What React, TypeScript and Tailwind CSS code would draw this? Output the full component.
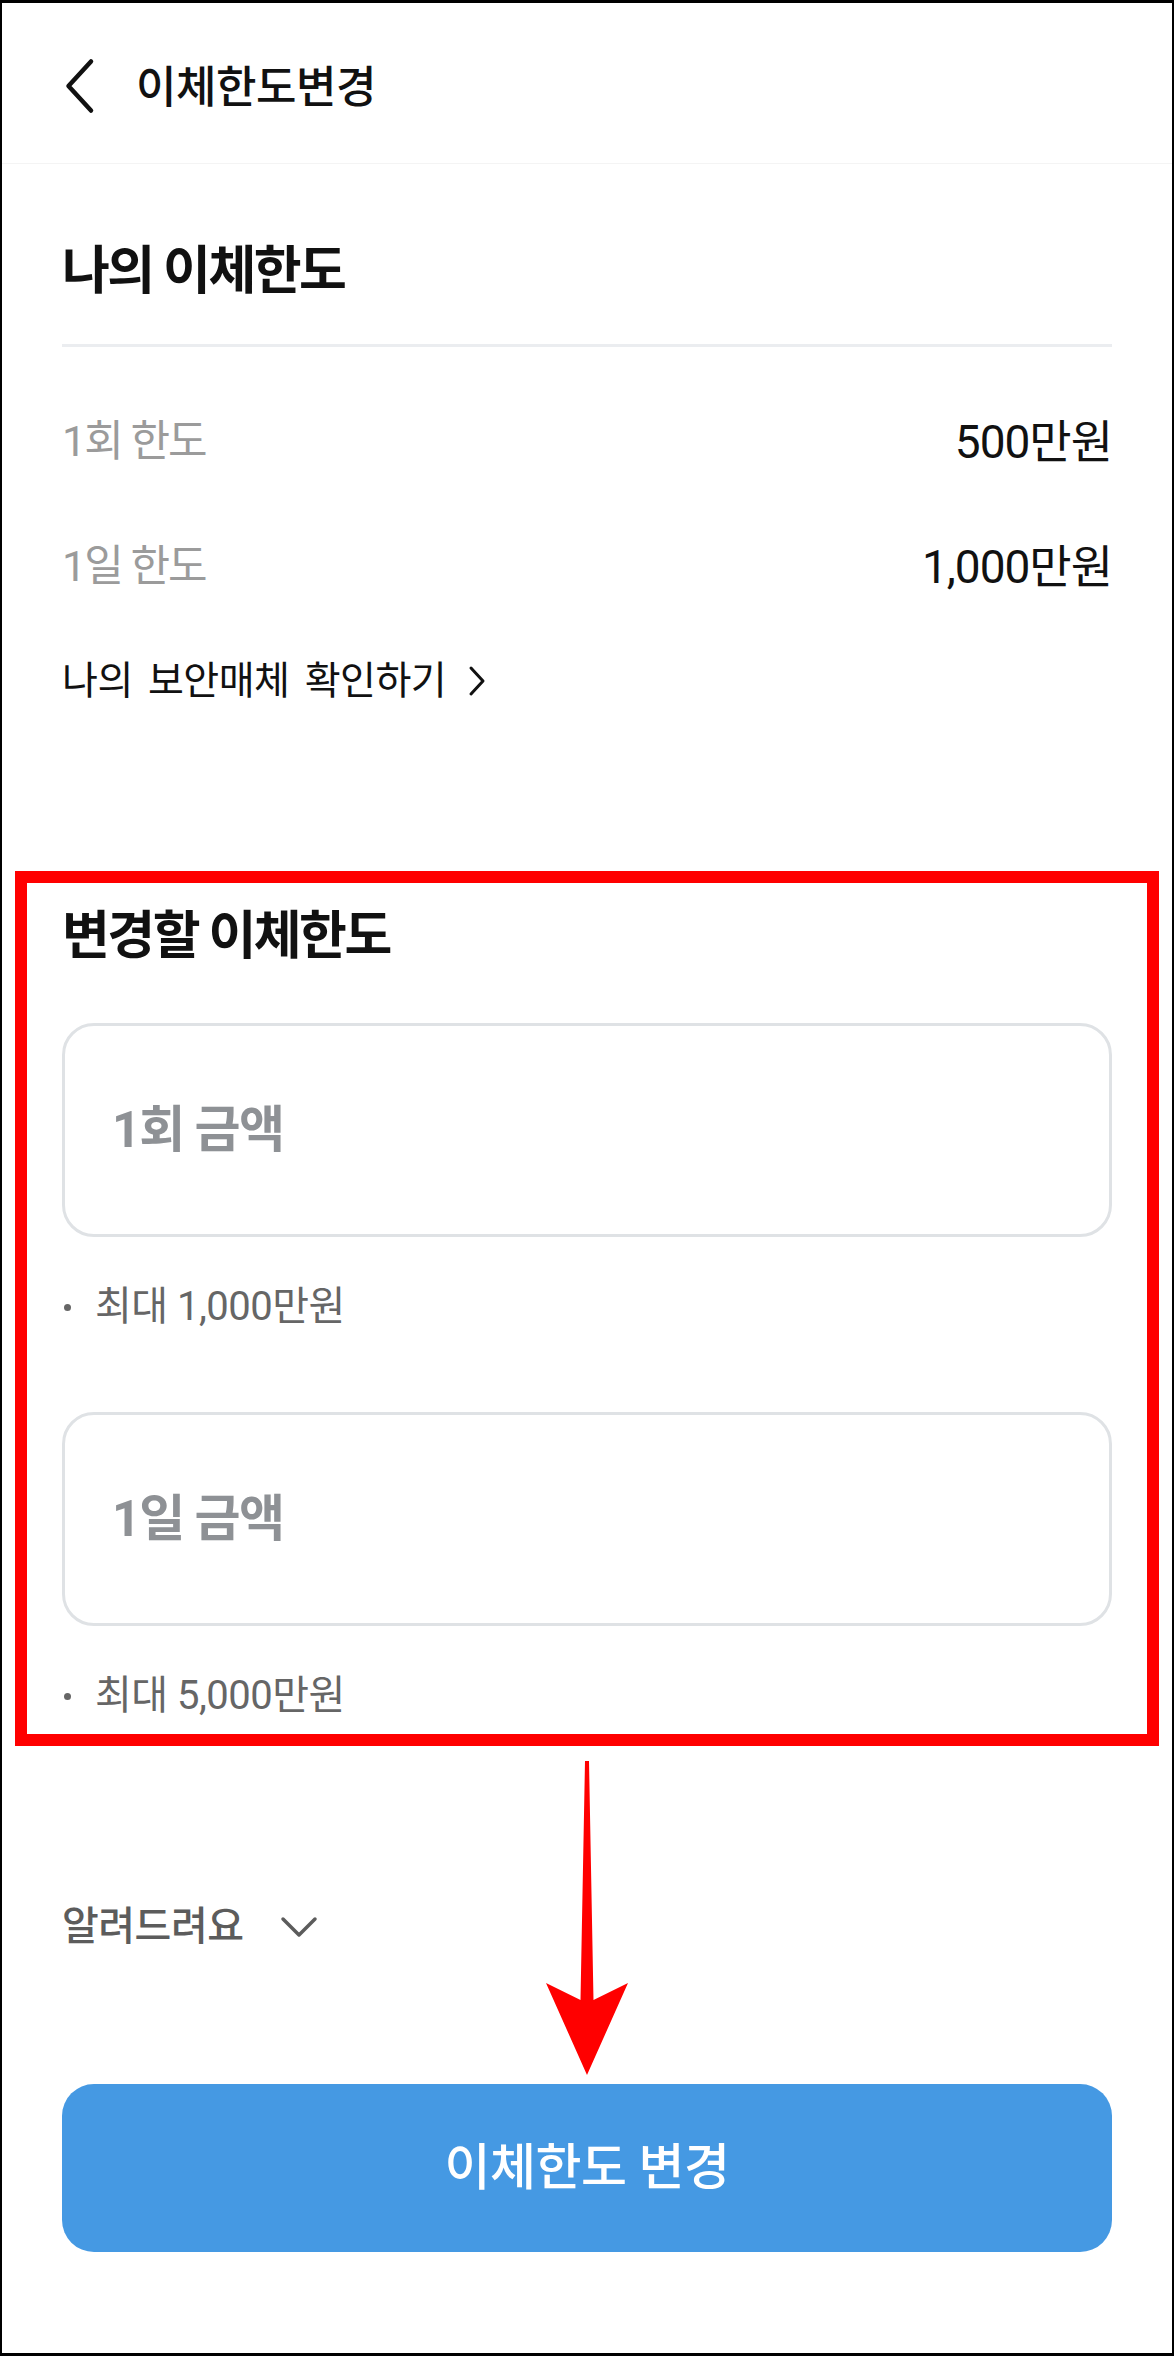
import React from 'react';

const BackIcon = () => (
  <svg width="34" height="60" viewBox="0 0 34 60" fill="none">
    <path d="M28 5.5 L5.5 30 L28 54.5" stroke="#111" strokeWidth="4.5" strokeLinecap="round" strokeLinejoin="round" />
  </svg>
);

const RightIcon = () => (
  <svg width="18" height="32" viewBox="0 0 18 32" fill="none">
    <path d="M3 3 L15 16 L3 29" stroke="#111" strokeWidth="3" strokeLinecap="round" strokeLinejoin="round" />
  </svg>
);

const DownIcon = () => (
  <svg width="38" height="24" viewBox="0 0 38 24" fill="none">
    <path d="M3 4 L19 20 L35 4" stroke="#5c5c5c" strokeWidth="3.5" strokeLinecap="round" strokeLinejoin="round" />
  </svg>
);

// 빨간 화살표 (주석용)
const RedArrow = () => (
  <svg width="82" height="314" viewBox="0 0 82 314">
    <polygon points="39,0 43,0 47.5,239 82,222 41,314 0,222 34.5,239" fill="#ff0000" />
  </svg>
);

interface LimitRowProps {
  label: string;
  value: string;
}

const LimitRow: React.FC<LimitRowProps> = ({ label, value }) => (
  <div className="h-[125px] flex items-center justify-between leading-none">
    <span className="text-[43px] tracking-[-2px] text-[#9b9b9b]">{label}</span>
    <span className="text-[46px] tracking-[-1px] text-[#111]">{value}</span>
  </div>
);

interface AmountFieldProps {
  placeholder: string;
  note: string;
}

const AmountField: React.FC<AmountFieldProps> = ({ placeholder, note }) => (
  <div>
    <div className="h-[214px] rounded-[32px] border-[3px] border-[#dfe2e5] flex items-center px-[47px]">
      <span className="text-[50px] leading-none font-bold tracking-[-1.5px] text-[#8e9195]">{placeholder}</span>
    </div>
    <div className="mt-[35px] h-[70px] flex items-center text-[40px] leading-none text-[#666] tracking-[-0.5px]">
      <span className="w-[7px] h-[7px] rounded-full bg-[#666] ml-[2px] mr-[24px]" />
      <span>{note}</span>
    </div>
  </div>
);

export default function App() {
  return (
    <div className="relative w-[1174px] h-[2356px] border-x-2 border-y-[3px] border-black bg-white flex flex-col font-['Roboto','Noto_Sans_CJK_KR',sans-serif] text-[#111]">
      {/* 헤더 */}
      <header className="h-[161px] border-b border-[#f4f4f4] flex items-center pl-[61px] pt-[6px]">
        <BackIcon />
        <h1 className="ml-[39px] mt-[3px] text-[44px] leading-none font-medium tracking-[-0.5px]">이체한도변경</h1>
      </header>

      <main className="flex-1 flex flex-col px-[60px]">
        {/* 나의 이체한도 */}
        <div className="mt-[36px] h-[144px] flex items-center">
          <h2 className="text-[52px] leading-none font-bold tracking-[-2.5px]">나의 이체한도</h2>
        </div>
        <div className="h-[3px] bg-[#ebedf0]" />

        <div className="mt-[32px]">
          <LimitRow label="1회 한도" value="500만원" />
          <LimitRow label="1일 한도" value="1,000만원" />
        </div>

        <button className="h-[104px] flex items-center self-start text-[39px] leading-none tracking-[-0.5px] [word-spacing:6px]">
          <span>나의 보안매체 확인하기</span>
          <span className="ml-[22px]">
            <RightIcon />
          </span>
        </button>

        {/* 변경할 이체한도 (빨간 테두리 강조) */}
        <section className="mt-[138px] mx-[-47px] border-[12px] border-[#ff0000] px-[35px] pb-[3px]">
          <div className="h-[108px] flex items-center">
            <h2 className="text-[52px] leading-none font-bold tracking-[-2.5px]">변경할 이체한도</h2>
          </div>
          <div className="mt-[32px]">
            <AmountField placeholder="1회 금액" note="최대 1,000만원" />
          </div>
          <div className="mt-[70px]">
            <AmountField placeholder="1일 금액" note="최대 5,000만원" />
          </div>
        </section>

        <button className="mt-[146px] h-[70px] flex items-center self-start text-[40px] leading-none font-medium tracking-[-0.5px] text-[#5c5c5c]">
          <span>알려드려요</span>
          <span className="ml-[36px]">
            <DownIcon />
          </span>
        </button>

        <button className="mt-[122px] h-[168px] rounded-[32px] bg-[#4599e3] flex items-center justify-center text-white text-[50px] leading-none font-medium tracking-[-0.5px]">
          이체한도 변경
        </button>
      </main>

      <div className="absolute left-[544px] top-[1758px]">
        <RedArrow />
      </div>
    </div>
  );
}
